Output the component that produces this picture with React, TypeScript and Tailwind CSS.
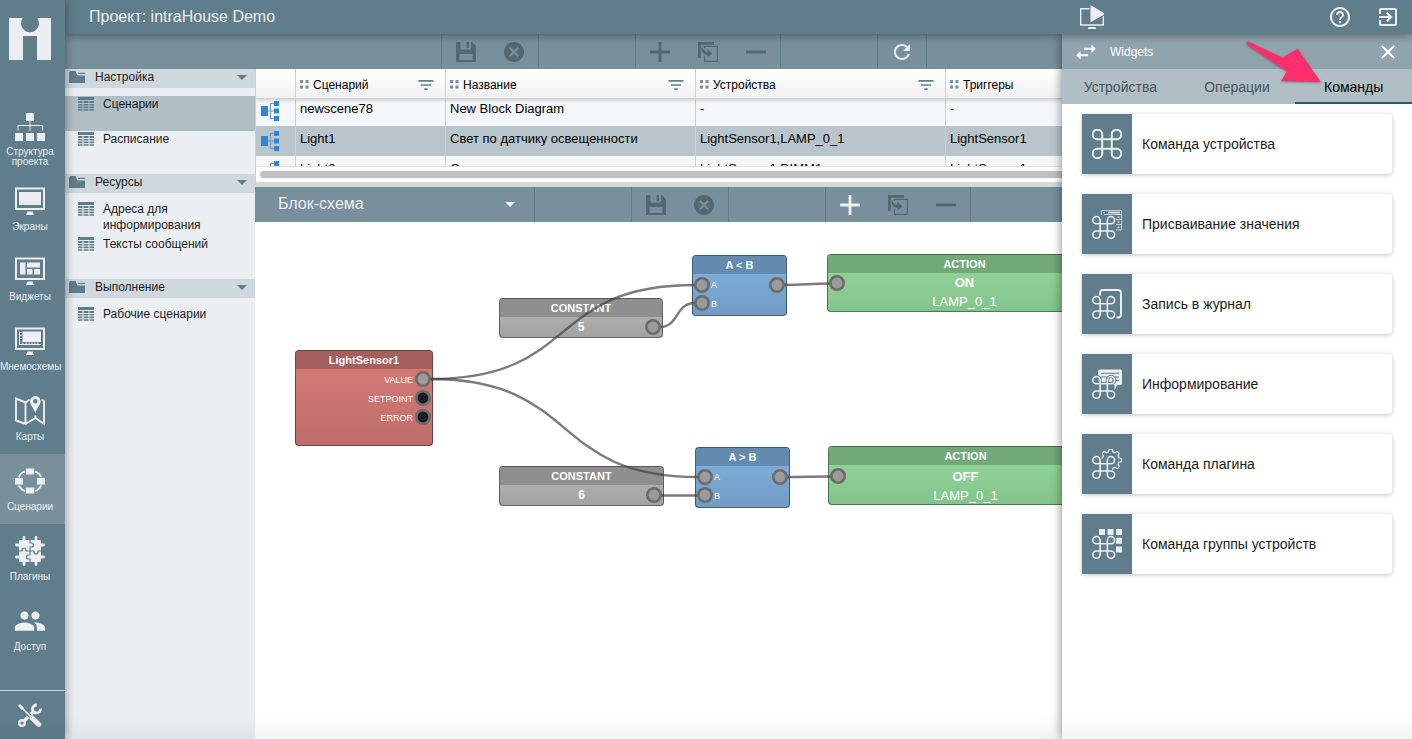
import React from "react";
import {
  MdCancel, MdAdd, MdRemove, MdRefresh, MdFilterList, MdHelpOutline,
  MdExitToApp, MdSwapHoriz, MdClose, MdPeople, MdArrowDropDown,
} from "react-icons/md";

type Kids = { children?: React.ReactNode };

/* ---------- Navigation icons (30 x 30) ---------- */

const Glyph = ({ children }: Kids) => (
  <svg viewBox="0 0 30 30" className="size-[30px] shrink-0" fill="currentColor" aria-hidden="true">{children}</svg>
);

const StructureIcon = () => (
  <Glyph>
    <path d="M11 2h8v8h-8zM0 22h8v8H0zM11 22h8v8h-8zM22 22h8v8h-8z" />
    <path d="M15 10v10M3 19.5V14.5H27.5V19.5" fill="none" stroke="currentColor" strokeWidth="1" />
  </Glyph>
);

const Monitor = ({ children }: Kids) => (
  <Glyph>
    <rect x="1" y="2.500" width="28" height="20.500" fill="none" stroke="currentColor" strokeWidth="2" />
    <path d="M12.500 25.500h5l1.500 3.500h-8z" />
    {children}
  </Glyph>
);

const ScreenIcon = () => <Monitor><rect x="4" y="6" width="22" height="13" /></Monitor>;
const WidgetIcon = () => <Monitor><path d="M5 6.5h5.5v12H5zM12 6.5h13v5H12zM12 13h5.5v5.500H12zM19 13h6v5.500h-6z" /></Monitor>;
const SchemeIcon = () => (
  <Monitor>
    <rect x="7.500" y="5.500" width="18.500" height="10.500" />
    <path d="M4.500 5.500V19M4.500 6.500h2M4.500 9.500h2M4.500 12.500h2M4 18.500h22M8 18.500v-2M11 18.500v-2M14 18.500v-2M17 18.500v-2M20 18.500v-2M23 18.500v-2" fill="none" stroke="currentColor" strokeWidth="1" />
  </Monitor>
);
const MapIcon = () => (
  <Glyph>
    <path d="M1 2.500L10.500 6.500V28L1 24.500ZM10.500 6.500L14.500 3.500M10.500 28L20.500 22L29 28V5L26.500 3.800M20.500 22v-2.500" fill="none" stroke="currentColor" strokeWidth="1.900" />
    <path fillRule="evenodd" d="M20.300 0c-3 0-5.200 2.300-5.200 5.200 0 4 4.200 7.300 5.200 12 1-4.700 5.200-8 5.200-12C25.500 2.300 23.300 0 20.300 0zm0 3a2.300 2.300 0 1 1 0 4.600 2.300 2.300 0 0 1 0-4.600z" />
  </Glyph>
);
const ScenarioIcon = () => (
  <Glyph>
    <path d="M10.800 2.500h8.400v6h-8.400zM0 12h8v6.500H0zM22 12h8v6.500h-8zM10.800 21.500h8.400v6h-8.400z" />
    <path d="M20 5.500Q25 7.200 26 11.200M26 19.200Q25 23 20 25M10 25Q5 23 4 19.200M4 11.200Q5 7.200 10 5.500" fill="none" stroke="currentColor" strokeWidth="1.800" />
  </Glyph>
);
const PluginIcon = () => (
  <Glyph>
    <rect x="4" y="4" width="22" height="22" rx="1" />
    <path d="M9 5V1.500M21 5V1.500M9 25v3.500M21 25v3.500M5 9H1.500M5 21H1.500M25 9h3.500M25 21h3.500" stroke="currentColor" strokeWidth="2.800" strokeLinecap="round" />
    <path d="M15 3V7h1.500a2 2 0 0 1 0 4H15V15h-4v-1a2 2 0 0 0-4 0v1H3M15 15v4h-1.500a2 2 0 0 0 0 4H15V27M15 15h4v1a2 2 0 0 0 4 0V15H27" fill="none" stroke="#607d8b" strokeWidth="1.200" />
  </Glyph>
);

const ToolsIcon = () => (
  <svg viewBox="0 0 24 24" className="size-6" fill="none" aria-hidden="true">
    <g stroke="currentColor">
      <circle cx="4" cy="20" r="2.800" strokeWidth="2.400" />
      <path d="M6 18L16 8" strokeWidth="3.400" />
      <path d="M18.800 2A4 4 0 1 0 22.500 5.700" strokeWidth="2.800" />
    </g>
    <path d="M1.500 2.500L13 14" stroke="#607d8b" strokeWidth="3.600" />
    <g stroke="currentColor">
      <path d="M1.500 2.500L13 14" strokeWidth="1.700" />
      <path d="M1 2L5 6" strokeWidth="3" />
      <path d="M14 15L20.800 21.300" strokeWidth="5" strokeLinecap="round" />
    </g>
  </svg>
);

const navItems = [
  { label: "Структура проекта", icon: <StructureIcon /> },
  { label: "Экраны", icon: <ScreenIcon /> },
  { label: "Виджеты", icon: <WidgetIcon /> },
  { label: "Мнемосхемы", icon: <SchemeIcon /> },
  { label: "Карты", icon: <MapIcon /> },
  { label: "Сценарии", icon: <ScenarioIcon />, active: true },
  { label: "Плагины", icon: <PluginIcon /> },
  { label: "Доступ", icon: <MdPeople className="size-[30px] shrink-0 scale-110" /> },
];

function SideNav() {
  return (
    <nav className="z-20 flex w-[65px] shrink-0 flex-col bg-[#607d8b] text-[#eceff1] shadow-[2px_0_8px_rgba(0,0,0,0.3)]">
      <div className="flex h-[104px] w-[60px] shrink-0 justify-center pt-[18px]">
        <svg viewBox="0 0 42 42" className="size-[42px]" fill="currentColor" aria-label="intraHouse">
          <path d="M0 0H13.700A9 9 0 1 0 28.300 0H42V42H28V18H14V42H0Z" />
        </svg>
      </div>
      {navItems.map((n) => (
        <a
          key={n.label}
          href="#"
          className={
            "flex h-[70px] shrink-0 flex-col items-center justify-center gap-[6px] pr-[5px] text-center text-[10px] leading-[10px] " +
            (n.active ? "bg-[#78909c]" : "")
          }
        >
          {n.icon}
          <span className="w-[60px]">{n.label}</span>
        </a>
      ))}
      <button className="mt-auto flex h-[49px] shrink-0 items-center justify-center border-t border-[#cfd8dc] pr-[5px]" aria-label="Инструменты">
        <ToolsIcon />
      </button>
    </nav>
  );
}

/* ---------- Top bar ---------- */

function TopBar() {
  return (
    <header className="z-10 flex h-[34px] shrink-0 items-center bg-[#607d8b] pr-3 pl-6 text-[#eceff1] shadow-[0_2px_8px_rgba(0,0,0,0.35)]">
      <h1 className="text-base">Проект: intraHouse Demo</h1>
      <button className="ml-auto" aria-label="Запуск">
        <svg viewBox="0 0 24 24" className="size-6" fill="currentColor" aria-hidden="true">
          <path d="M10.500 3.700H.7V20H23.300V8" fill="none" stroke="currentColor" strokeWidth="1.400" />
          <path d="M8.500 22h7l.8 2h-8.600z" />
          <path d="M10.700 .3v16.700L24 9.500z" stroke="#607d8b" strokeWidth="2.400" paintOrder="stroke" />
          <path d="M10.700 .3v16.700L24 9.500V8z" />
        </svg>
      </button>
      <div className="ml-[224px] flex items-center gap-6">
        <button aria-label="Справка"><MdHelpOutline className="size-6" /></button>
        <button aria-label="Выход"><MdExitToApp className="size-6" /></button>
      </div>
    </header>
  );
}

/* ---------- Toolbars ---------- */

const SaveIcon = () => (
  <svg viewBox="0 0 20 20" className="size-5" fill="currentColor" aria-hidden="true">
    <path fillRule="evenodd" d="M0 1Q0 0 1 0H4.500V6.500Q4.500 7.500 5.500 7.500H14Q15 7.500 15 6.500V0H16L20 4V19Q20 20 19 20H1Q0 20 0 19ZM3.500 12V18H16.500V12ZM10.500 0H13V6H10.500Z" />
  </svg>
);

const CopyIcon = () => (
  <svg viewBox="0 0 20 20" className="size-5" fill="currentColor" aria-hidden="true">
    <path d="M0 16V0H16V2.800H2.800V16Z" />
    <path d="M6.500 6V4.300H19.400V19.400H6.500V14" fill="none" stroke="currentColor" strokeWidth="1.200" />
    <path d="M3 5.500C5 6 6 9.800 9.500 9.800V7L14.500 11.500L9.500 15.500V13C6 13 3.500 10 3 5.500Z" />
  </svg>
);

const ToolGroup = ({ children }: Kids) => (
  <div className="flex h-full shrink-0 border-l border-[#607d8b]">{children}</div>
);

function ToolButton({ label, lit, children }: Kids & { label: string; lit?: boolean }) {
  return (
    <button
      aria-label={label}
      className={"flex h-full w-12 items-center justify-center " + (lit ? "text-[#eceff1]" : "text-[#546872]")}
    >
      {children}
    </button>
  );
}

const Gap = () => <div className="h-full w-[97px] shrink-0 border-l border-[#607d8b]" />;

function EditTools({ lit }: { lit?: boolean }) {
  return (
    <>
      <ToolGroup>
        <ToolButton label="Сохранить"><SaveIcon /></ToolButton>
        <ToolButton label="Отменить"><MdCancel className="size-6" /></ToolButton>
      </ToolGroup>
      <Gap />
      <ToolGroup>
        <ToolButton label="Добавить" lit={lit}><MdAdd className="size-[34px]" /></ToolButton>
        <ToolButton label="Копировать"><CopyIcon /></ToolButton>
        <ToolButton label="Удалить"><MdRemove className="size-[34px]" /></ToolButton>
      </ToolGroup>
    </>
  );
}

/* ---------- Tree ---------- */

const FolderIcon = () => (
  <svg viewBox="0 0 16 12" className="h-3 w-4" fill="#607d8b" aria-hidden="true">
    <path d="M0 12V1.500L1 0H6.500L8.500 4.500H16V12ZM8.500 1.800H16V3H9.200Z" />
  </svg>
);
const TableIcon = () => (
  <svg viewBox="0 0 16 14" className="mt-px h-[14px] w-4 shrink-0" fill="#607d8b" aria-hidden="true">
    <path d="M0 0h16v3H0zM0 4h4.500v2H0zM5.500 4h5v2h-5zM11.500 4H16v2h-4.500zM0 7h4.500v1.600H0zM5.500 7h5v1.600h-5zM11.500 7H16v1.600h-4.500zM0 9.600h4.500v1.600H0zM5.500 9.600h5v1.600h-5zM11.500 9.600H16v1.600h-4.500zM0 12.200h4.500v1.500H0zM5.500 12.200h5v1.500h-5zM11.500 12.200H16v1.500h-4.500z" />
  </svg>
);

const tree = [
  { title: "Настройка", items: ["Сценарии", "Расписание"] },
  { title: "Ресурсы", items: ["Адреса для информирования", "Тексты сообщений"] },
  { title: "Выполнение", items: ["Рабочие сценарии"] },
];

function Tree() {
  return (
    <aside className="w-[190px] shrink-0 bg-[#eceff1] text-xs text-[#1b1b1b]">
      {tree.map((g) => (
        <section key={g.title}>
          <button className="flex h-[19px] w-full items-center gap-[10px] bg-[#cfd8dc] pr-px pb-[3px] pl-1 text-left leading-4">
            <FolderIcon />
            <span className="flex-1">{g.title}</span>
            <MdArrowDropDown className="size-6 text-[#607d8b]" />
          </button>
          <ul className="py-2">
            {g.items.map((t) => (
              <li key={t}>
                <a href="#" className={"flex h-[35px] gap-[9px] pr-10 pl-[13px] leading-4 " + (t === "Сценарии" ? "bg-[#b0bec5]" : "")}>
                  <TableIcon />
                  <span>{t}</span>
                </a>
              </li>
            ))}
          </ul>
        </section>
      ))}
    </aside>
  );
}

/* ---------- Scenario table ---------- */

const BlockIcon = () => (
  <svg viewBox="0 0 18 20" className="h-5 w-[18px]" aria-hidden="true">
    <path d="M7 10h6M13 2.500H9.500V17.500H13" fill="none" stroke="#7b9cb8" strokeWidth="1.200" />
    <path d="M0 5h7v10H0zM13 0h5v5h-5zM13 7.500h5v5h-5zM13 15h5v5h-5z" fill="#2f86d6" />
  </svg>
);

const columns = [
  { title: "Сценарий", filter: true },
  { title: "Название", filter: true },
  { title: "Устройства", filter: true },
  { title: "Триггеры", filter: false },
];

const rows = [
  ["newscene78", "New Block Diagram", "-", "-"],
  ["Light1", "Свет по датчику освещенности", "LightSensor1,LAMP_0_1", "LightSensor1"],
  ["Light2", "Свет по датчику освещенности", "LightSensor1,DIMM1", "LightSensor1"],
];

function ScenarioTable() {
  return (
    <div className="border-l border-[#d0d0d0] bg-white text-black">
      <div className="h-[97px] overflow-hidden">
        <table className="w-full table-fixed border-separate border-spacing-0">
          <colgroup>
            <col className="w-10" />
            <col className="w-[150px]" />
            <col className="w-[250px]" />
            <col className="w-[250px]" />
            <col />
          </colgroup>
          <thead className="relative z-[1] shadow-[0_1px_4px_rgba(0,0,0,0.2)]">
            <tr className="h-[30px] bg-linear-to-b from-white to-[#f0f0f0] text-xs">
              <th className="border-r border-b border-[#d0d0d0]" aria-label="Тип" />
              {columns.map((c) => (
                <th key={c.title} className="border-r border-b border-[#d0d0d0] p-0 pt-[2px] pr-[9px] pl-1 text-left font-normal last:border-r-0">
                  <div className="flex items-center gap-1">
                    <svg viewBox="0 0 9 9" className="size-[9px]" fill="#78909c" aria-hidden="true">
                      <path d="M0 0h3v3H0zM5.500 0h3v3h-3zM0 5.500h3v3H0zM5.500 5.500h3v3h-3z" />
                    </svg>
                    <span className="flex-1">{c.title}</span>
                    {c.filter && <MdFilterList className="size-5 text-[#607d8b]" />}
                  </div>
                </th>
              ))}
            </tr>
          </thead>
          <tbody className="relative top-[-3px] text-[13px] leading-4">
            {rows.map((r, i) => (
              <tr key={r[0]} className={"h-[30px] " + (i === 1 ? "bg-[#b9c5cb]" : "bg-[#f5f7f9]")}>
                <td className="border-r border-[#d0d0d0] p-0 pl-[5px]"><BlockIcon /></td>
                {r.map((v, j) => (
                  <td key={j} className="border-r border-[#d0d0d0] p-0 pb-1 pl-1 whitespace-nowrap last:border-r-0">{v}</td>
                ))}
              </tr>
            ))}
          </tbody>
        </table>
      </div>
      <div className="overflow-hidden border-t border-[#e0e0e0] py-1 pl-1">
        <div className="h-[7px] rounded-l-full bg-[#c1c1c1]" />
      </div>
      <div className="h-[5px] bg-[#d8d8d8]" />
    </div>
  );
}

/* ---------- Diagram ---------- */

const Node = ({ place, head, body, title, children }: Kids & { place: string; head: string; body: string; title: string }) => (
  <div className={"absolute overflow-hidden rounded border border-black/45 text-center text-white " + place + " " + body}>
    <div className={"h-[18px] text-[11px] leading-[18px] font-bold " + head}>{title}</div>
    {children}
  </div>
);

const grey = { head: "bg-[#8f8f8f]", body: "bg-linear-to-b from-[#bababa] to-[#a2a2a2]" };
const blue = { head: "bg-[#638bb0]", body: "bg-linear-to-b from-[#80b4e2] to-[#719cc4]" };
const green = { head: "bg-[#72a979]", body: "bg-linear-to-b from-[#93d99b] to-[#84c48c]" };
const red = { head: "bg-[#a55f5d]", body: "bg-linear-to-b from-[#d97c78] to-[#bd6d6a]" };

const Inputs = () => (
  <div className="pt-[2px] pl-[18px] text-left text-[9px] leading-[19px]">
    <div>A</div>
    <div>B</div>
  </div>
);

const ports = [
  [168, 157], [398, 105], [399, 273], [447, 63], [447, 81], [522, 63],
  [450, 255], [450, 273], [525, 255], [582, 61], [583, 254],
];

function Diagram() {
  return (
    <div className="relative min-h-[320px] flex-1 overflow-hidden bg-white">
      <Node place="left-10 top-32 h-24 w-[138px]" title="LightSensor1" {...red}>
        <div className="pt-[2px] pr-[19px] text-right text-[9px] leading-[19px]">
          <div>VALUE</div>
          <div>SETPOINT</div>
          <div>ERROR</div>
        </div>
      </Node>
      <Node place="left-[244px] top-[76px] h-10 w-[164px]" title="CONSTANT" {...grey}>
        <div className="text-xs leading-[21px] font-bold">5</div>
      </Node>
      <Node place="left-[244px] top-[244px] h-10 w-[165px]" title="CONSTANT" {...grey}>
        <div className="text-xs leading-[21px] font-bold">6</div>
      </Node>
      <Node place="left-[437px] top-[33px] h-[61px] w-[95px]" title="A < B" {...blue}><Inputs /></Node>
      <Node place="left-[440px] top-[225px] h-[61px] w-[95px]" title="A > B" {...blue}><Inputs /></Node>
      <Node place="left-[572px] top-[32px] h-[58px] w-[275px]" title="ACTION" {...green}>
        <div className="text-[13px] leading-[19px]"><b>ON</b><br />LAMP_0_1</div>
      </Node>
      <Node place="left-[573px] top-[224px] h-[59px] w-[275px]" title="ACTION" {...green}>
        <div className="pt-[2px] text-[13px] leading-[19px]"><b>OFF</b><br />LAMP_0_1</div>
      </Node>
      <svg className="absolute inset-0 size-full" aria-hidden="true">
        <g fill="none" stroke="#3c3c3c" strokeOpacity="0.680" strokeWidth="2.400">
          <path d="M175 157C326 157 290 63 440 63" />
          <path d="M175 157C326 157 293 255 443 255" />
          <path d="M405 105C424 105 420 81 440 81" />
          <path d="M406 273.500H443" />
          <path d="M529 63C550 63 555 61.500 575 61.500" />
          <path d="M532 255C550 255 556 254.500 576 254.500" />
        </g>
        <g fill="#9b9b9b" stroke="#6c6c6c" strokeWidth="2.600">
          {ports.map(([x, y]) => <circle key={x + "-" + y} cx={x} cy={y} r="6.700" />)}
        </g>
        <g fill="#1c1c1c" stroke="#6c6c6c" strokeWidth="2.600">
          <circle cx="168" cy="176" r="6.700" />
          <circle cx="168" cy="195" r="6.700" />
        </g>
      </svg>
    </div>
  );
}

/* ---------- Widgets drawer ---------- */

const commandPath = "M15 6v12a3 3 0 1 0 3-3H6a3 3 0 1 0 3 3V6a3 3 0 1 0-3 3h12a3 3 0 1 0-3-3";

const SmallCommand = ({ halo }: { halo?: boolean }) => (
  <g transform="translate(-2.800 3.800) scale(1.210)" fill="none" strokeLinecap="round">
    {halo && <path d={commandPath} stroke="#607d8b" strokeWidth="2.800" />}
    <path d={commandPath} stroke="currentColor" strokeWidth="1.300" />
  </g>
);

/* Outline of the part of the cog that shows behind the command sign. */
const cogPath = Array.from({ length: 101 }, (_, i) => {
  const a = -3.1 + (i / 100) * 4.5;
  const r = 9.6 + 1.5 * Math.max(-0.8, Math.min(0.8, 1.8 * Math.cos(8 * a)));
  return (i ? "L" : "M") + (18.7 + r * Math.cos(a)).toFixed(2) + " " + (11 + r * Math.sin(a)).toFixed(2);
}).join("");

const commands = [
  {
    label: "Команда устройства",
    icon: <g transform="translate(-4.100 -4.100) scale(1.590)"><path d={commandPath} fill="none" stroke="currentColor" strokeWidth="1.250" /></g>,
  },
  {
    label: "Присваивание значения",
    icon: (
      <>
        <path d="M9.500 6V1.500H29.500V5.500H12M22.500 5.500H29.500V10.500H24M24 15.500H29.500V10.500M24 21H29.500V15.500" fill="none" stroke="currentColor" strokeOpacity="0.800" strokeWidth="0.900" />
        <path d="M11 3h2v1.300h-2zM16 2.800h12v1.500H16zM25.500 7.500h2v1.500h-2zM25.500 12.500h2V14h-2zM25.500 17.800h2v1.500h-2z" />
        <SmallCommand halo />
      </>
    ),
  },
  {
    label: "Запись в журнал",
    icon: (
      <>
        <path d="M8 6.500V4Q8 1 11 1H26Q29 1 29 4V25.500Q29 28.500 26 28.500H24.500" fill="none" stroke="currentColor" strokeWidth="2" />
        <SmallCommand />
      </>
    ),
  },
  {
    label: "Информирование",
    icon: (
      <>
        <path d="M8 .5H28.500Q30 .5 30 2V14.500Q30 16 28.500 16H25.500L22.500 21V16H8Q6.200 16 6.200 14.500V2Q6.200 .5 8 .5Z" />
        <path d="M9 4.300H27M9 8H27M20 11.700H27" stroke="#607d8b" strokeWidth="1" />
        <SmallCommand halo />
      </>
    ),
  },
  {
    label: "Команда плагина",
    icon: (
      <>
        <path d={cogPath} fill="none" stroke="currentColor" strokeWidth="1.200" />
        <SmallCommand halo />
      </>
    ),
  },
  {
    label: "Команда группы устройств",
    icon: (
      <>
        <path d="M7 0h6v6H7zM15.500 0h6v6h-6zM24 0h6v6h-6zM24 8.800h6v6h-6zM24 17.500h6v6h-6z" />
        <SmallCommand halo />
      </>
    ),
  },
];

const tabs = ["Устройства", "Операции", "Команды"];

function Drawer() {
  return (
    <aside className="relative z-[5] flex w-[350px] shrink-0 flex-col bg-white shadow-[0_0_10px_rgba(0,0,0,0.5)]">
      <div className="flex h-[35px] shrink-0 items-center bg-[#90a4ae] pr-3 pl-[11px] text-xs text-white">
        <button aria-label="Переместить"><MdSwapHoriz className="size-[26px]" /></button>
        <h2 className="ml-[11px] flex-1">Widgets</h2>
        <button aria-label="Закрыть"><MdClose className="size-6" /></button>
      </div>
      <div role="tablist" className="grid h-[35px] shrink-0 grid-cols-3 bg-[#b0bec5] text-sm">
        {tabs.map((t) => (
          <button
            key={t}
            role="tab"
            aria-selected={t === "Команды"}
            className={"border-b-2 pt-[2px] " + (t === "Команды" ? "border-[#2c5a66] text-black" : "border-transparent text-[#4a545a]")}
          >
            {t}
          </button>
        ))}
      </div>
      <ul className="flex flex-col gap-5 px-5 py-[10px] text-sm text-[#1b1b1b]">
        {commands.map((c) => (
          <li key={c.label} className="flex h-[60px] items-center rounded-sm bg-white shadow-[0_1px_4px_rgba(0,0,0,0.25)]">
            <span className="flex h-full w-[50px] items-center justify-center bg-[#607d8b] text-[#eceff1]">
              <Glyph>{c.icon}</Glyph>
            </span>
            <span className="pl-[10px]">{c.label}</span>
          </li>
        ))}
      </ul>
      <svg viewBox="0 0 80 48" className="absolute top-[4px] left-[182px] h-12 w-20 drop-shadow-[0_1px_1px_rgba(0,0,0,0.35)]" aria-hidden="true">
        <path d="M3.500 3.500Q1.500 4.500 3 6.500L43 33.500L37 43L77 44L53.500 10.800L38.500 19.500L5 3.800Q4 3.200 3.500 3.500Z" fill="#ff2f6d" />
      </svg>
    </aside>
  );
}

/* ---------- Page ---------- */

export default function App() {
  return (
    <div className="relative flex min-h-screen overflow-hidden bg-white font-['Liberation_Sans',Arial,sans-serif]">
      <SideNav />
      <div className="flex min-w-0 flex-1 flex-col">
        <TopBar />
        <div className="flex min-h-0 flex-1">
          <div className="flex min-w-0 flex-1 flex-col">
            <div className="flex h-[35px] shrink-0 overflow-hidden bg-[#78909c] pl-[376px]">
              <EditTools />
              <Gap />
              <ToolGroup><ToolButton label="Обновить" lit><MdRefresh className="size-6" /></ToolButton></ToolGroup>
              <ToolGroup />
            </div>
            <div className="flex min-h-0 flex-1">
              <Tree />
              <main className="flex min-w-0 flex-1 flex-col">
                <ScenarioTable />
                <div className="flex h-[35px] shrink-0 overflow-hidden bg-[#78909c] text-[#eceff1]">
                  <div className="relative w-[279px] shrink-0">
                    <select aria-label="Вид редактора" className="size-full appearance-none bg-transparent pb-[2px] pl-[23px] text-base">
                      <option>Блок-схема</option>
                    </select>
                    <MdArrowDropDown className="pointer-events-none absolute top-[5px] right-3 size-6" />
                  </div>
                  <Gap />
                  <EditTools lit />
                  <ToolGroup />
                </div>
                <Diagram />
              </main>
            </div>
          </div>
          <Drawer />
        </div>
      </div>
      <div className="pointer-events-none absolute inset-x-0 bottom-0 z-30 h-6 bg-linear-to-b from-transparent to-black/5" />
    </div>
  );
}
